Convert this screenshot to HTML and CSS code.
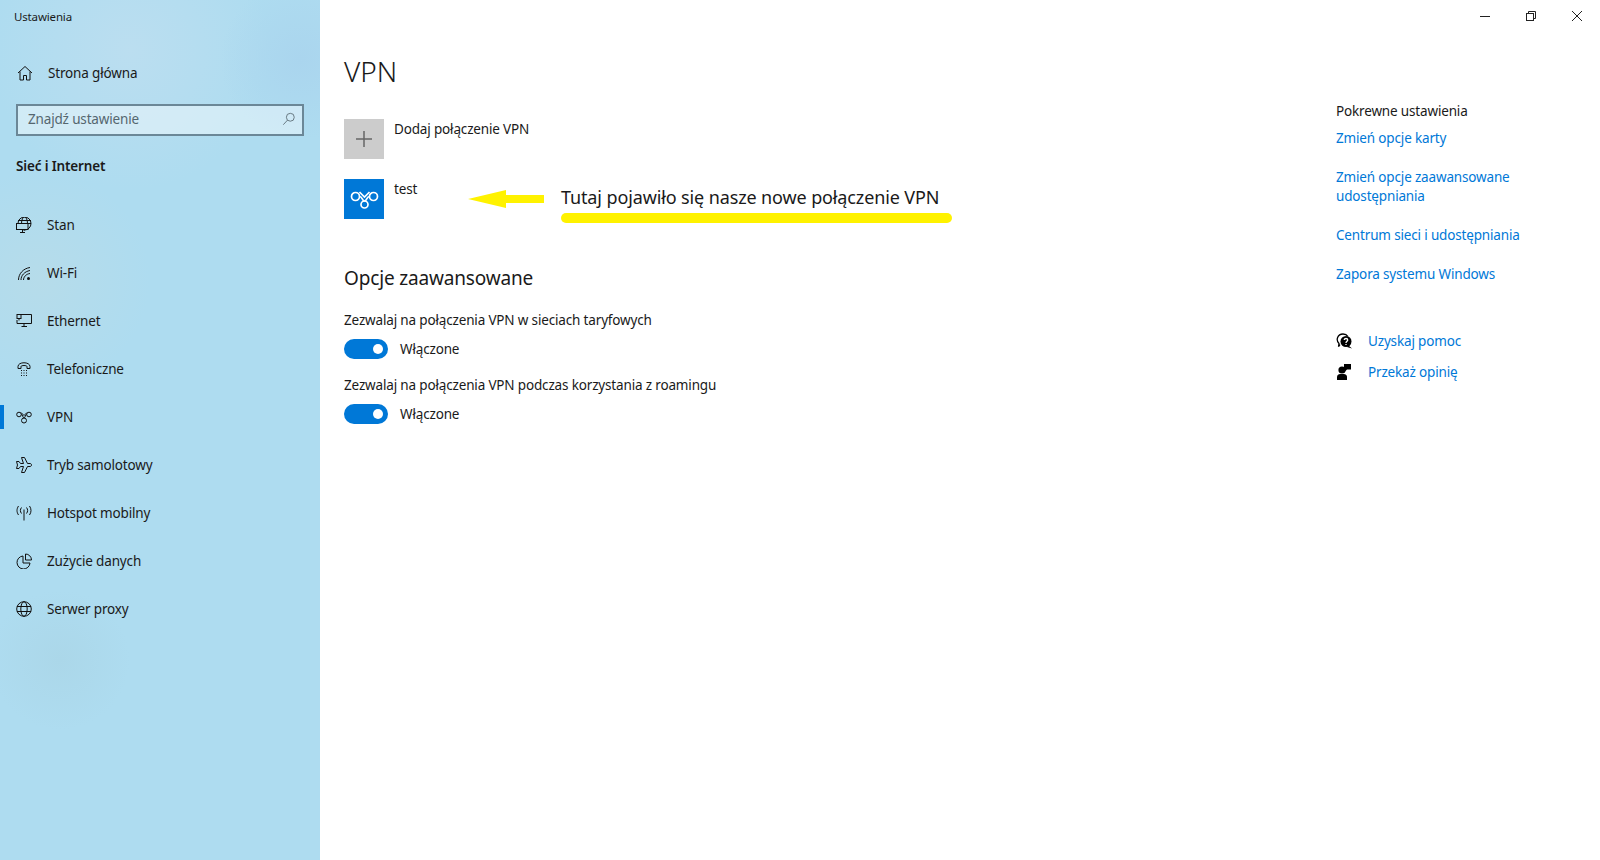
FILE: index.html
```html
<!DOCTYPE html>
<html lang="pl">
<head>
    <title>Ustawienia</title>
    <meta charset="UTF-8">
    <link rel="stylesheet" href="styles.css">
</head>
<body>
    <aside class="sidebar">
        <div class="app-title">Ustawienia</div>
        <a class="home-link">
            <svg class="nav-icon" viewBox="0 0 16 16"><path d="M1 8 8 1.500 15 8M3 6.500V15H6.500V10.500H9.500V15H13V6.500"/></svg>
            <span>Strona główna</span>
        </a>
        <div class="search">
            <span>Znajdź ustawienie</span>
            <svg class="search-icon" viewBox="0 0 16 16"><circle cx="9.500" cy="6" r="4.500"/><path d="M6.300 9.300 1.500 14.500"/></svg>
        </div>
        <div class="section-name">Sieć i Internet</div>
        <nav class="nav">
            <a class="nav-item">
                <svg class="nav-icon" viewBox="0 0 16 16"><circle cx="8.500" cy="6.500" r="6.500"/><ellipse cx="8.500" cy="6.500" rx="3" ry="6.500"/><path d="M2 3.500H15M2 6.500H15"/><rect class="filled-bg" x=".5" y="6.500" width="11.500" height="6"/><path d="M4 15.500H9M6.500 12.500V15.500"/></svg>
                <span>Stan</span>
            </a>
            <a class="nav-item">
                <svg class="nav-icon" viewBox="0 0 16 16"><path d="M2.500 15C2.500 9 7 3.500 14 2.500M5 15C5 10.500 8.500 6.500 14 5.500M7.500 15C7.500 12 10 9 14 8.500"/><circle class="dot" cx="12.500" cy="13.500" r="1.500"/></svg>
                <span>Wi-Fi</span>
            </a>
            <a class="nav-item">
                <svg class="nav-icon" viewBox="0 0 16 16"><path d="M5 1.500H15.500V10.500H1V7M5.500 13.500H11M8 10.500V13.500"/><rect x="1" y="1.500" width="4" height="4"/><path d="M3 5.500V7.500"/></svg>
                <span>Ethernet</span>
            </a>
            <a class="nav-item">
                <svg class="nav-icon" viewBox="0 0 16 16"><path d="M2 7.500V5.500C2 .5 14 .5 14 5.500V7.500H11V5.500C11 4.200 5 4.200 5 5.500V7.500Z"/><path class="dots" d="M5 9.500H11M5 12H11M5 14.500H11"/></svg>
                <span>Telefoniczne</span>
            </a>
            <a class="nav-item active">
                <svg class="nav-icon" viewBox="0 0 16 16"><circle cx="3" cy="5.500" r="2.300"/><circle cx="13" cy="5.500" r="2.300"/><circle cx="8" cy="11.500" r="2.500"/><path d="M5.300 5.500C7 5.500 6.500 9 8 9S9 5.500 10.700 5.500M5 3.500 8 6.500 11 3.500"/></svg>
                <span>VPN</span>
            </a>
            <a class="nav-item">
                <svg class="nav-icon" viewBox="0 0 16 16"><path d="M.5 4.500H3L4.500 6.500H7.500L5.500 .5H8.500L11.500 6.500H14C16 6.500 16 9.500 14 9.500H11.500L8.500 15.500H5.500L7.500 9.500H4.500L3 11.500H.5L1.500 8Z"/></svg>
                <span>Tryb samolotowy</span>
            </a>
            <a class="nav-item">
                <svg class="nav-icon" viewBox="0 0 16 16"><path d="M8 4.500V15.500M5.500 2.500C4 4.500 4 6.500 5.500 8.500M10.500 2.500C12 4.500 12 6.500 10.500 8.500M2.500 1C.5 4 .5 7 2.500 10M13.500 1C15.500 4 15.500 7 13.500 10"/></svg>
                <span>Hotspot mobilny</span>
            </a>
            <a class="nav-item">
                <svg class="nav-icon" viewBox="0 0 16 16"><path d="M7 3A6.500 6.500 0 1 0 14 10H7Z"/><path d="M9.500 1A6 6 0 0 1 15.500 7H9.500Z"/></svg>
                <span>Zużycie danych</span>
            </a>
            <a class="nav-item">
                <svg class="nav-icon" viewBox="0 0 16 16"><circle cx="8" cy="8" r="7.300"/><ellipse cx="8" cy="8" rx="3.200" ry="7.300"/><path d="M1 5.500H15M1 10.500H15"/></svg>
                <span>Serwer proxy</span>
            </a>
        </nav>
    </aside>

    <main class="main">
        <div class="window-controls">
            <svg viewBox="0 0 10 10"><path d="M0 5.500H10"/></svg>
            <svg viewBox="0 0 10 10"><path d="M2.500 2.500V.5H9.500V7.500H7.500"/><rect x=".5" y="2.500" width="7" height="7"/></svg>
            <svg viewBox="0 0 10 10"><path d="M0 0 10 10M10 0 0 10"/></svg>
        </div>
        <div class="columns">
            <section class="content">
                <h1>VPN</h1>
                <div class="tile-row">
                    <div class="tile tile-add">
                        <svg viewBox="0 0 16 16"><path d="M8 0V16M0 8H16"/></svg>
                    </div>
                    <span>Dodaj połączenie VPN</span>
                </div>
                <div class="tile-row">
                    <div class="tile tile-vpn">
                        <svg viewBox="0 0 29 19"><circle cx="5.500" cy="6.500" r="4"/><circle cx="23.500" cy="6.500" r="4"/><circle cx="14.500" cy="14.500" r="3.500"/><path d="M9.500 6.500C12.500 6.500 12 11 14.500 11S16.500 6.500 19.500 6.500M9.500 2 14.500 7 19.500 2"/></svg>
                    </div>
                    <span>test</span>
                </div>
                <h2>Opcje zaawansowane</h2>
                <div class="option">
                    <div class="option-label">Zezwalaj na połączenia VPN w sieciach taryfowych</div>
                    <div class="switch-row"><span class="switch"></span><span>Włączone</span></div>
                </div>
                <div class="option">
                    <div class="option-label">Zezwalaj na połączenia VPN podczas korzystania z roamingu</div>
                    <div class="switch-row"><span class="switch"></span><span>Włączone</span></div>
                </div>
            </section>
            <section class="related">
                <div class="related-title">Pokrewne ustawienia</div>
                <a class="link">Zmień opcje karty</a>
                <a class="link">Zmień opcje zaawansowane udostępniania</a>
                <a class="link">Centrum sieci i udostępniania</a>
                <a class="link">Zapora systemu Windows</a>
                <div class="help">
                    <a class="help-row">
                        <svg viewBox="0 0 17 16"><path class="thin" d="M4 11.500 2.500 13.500 3 10.500C-.5 7 1.500 1 7 1C9.500 1 11 2 12 3.500"/><circle class="solid" cx="10" cy="8.500" r="5.500"/><path class="solid" d="M12.500 12.500 16 15.500 11 14Z"/><path class="mark" d="M8.300 7C8.300 5 11.700 5 11.700 7C11.700 8.300 10 8.300 10 10M10 11V12"/></svg>
                        <span>Uzyskaj pomoc</span>
                    </a>
                    <a class="help-row">
                        <svg viewBox="0 0 17 16"><circle class="solid" cx="6" cy="6" r="3.600"/><path class="solid" d="M1 16V13C1 10.500 3 10 6 10S11 10.500 11 13V16Z"/><path class="solid" d="M8 0H15V5.500H11L9 7.500V5.500H8Z"/></svg>
                        <span>Przekaż opinię</span>
                    </a>
                </div>
            </section>
        </div>
        <!-- yellow note drawn over the screenshot -->
        <svg class="note-arrow" viewBox="0 0 76 18"><path d="M0 9 38 0V5H76V13H38V18Z"/></svg>
        <div class="note-text">Tutaj pojawiło się nasze nowe połączenie VPN</div>
        <div class="note-line"></div>
    </main>
</body>
</html>
```

FILE: styles.css
```css
* {
    box-sizing: border-box;
}

html, body {
    height: 100%;
}

body {
    margin: 0;
    display: flex;
    overflow: hidden;
    font-family: "Noto Sans", "Open Sans", Arial, sans-serif;
    font-size: 13.5px;
    letter-spacing: -0.16px;
    color: #1a1a1a;
    background: #fff;
}

svg {
    display: block;
    fill: none;
    stroke: currentColor;
    stroke-width: 1;
}

/* left pane */
.sidebar {
    width: 320px;
    flex: none;
    padding-top: 8px;
    background:
        radial-gradient(circle at 300px 60px, #aad5ee 0, rgba(170, 213, 238, 0) 80px),
        radial-gradient(circle at 130px 50px, #bbdef0 0, rgba(187, 222, 240, 0) 140px),
        radial-gradient(circle at 60px 660px, #abd7e9 0, rgba(171, 215, 233, 0) 70px),
        radial-gradient(circle at 40px 280px, #b6dcea 0, rgba(182, 220, 234, 0) 110px),
        #aedcf0;
}

.app-title {
    height: 18px;
    line-height: 18px;
    padding-left: 14px;
    font-size: 11.5px;
}

.home-link {
    display: flex;
    align-items: center;
    height: 48px;
    margin-top: 23px;
    padding-left: 17px;
}

.nav-icon {
    width: 16px;
    height: 16px;
    flex: none;
    margin-right: 15px;
    stroke: #111;
}

.search {
    display: flex;
    align-items: center;
    justify-content: space-between;
    height: 32px;
    margin: 7px 16px 0;
    padding: 0 6px 2px 10px;
    border: 2px solid #6b8797;
    background: rgba(255, 255, 255, 0.42);
    color: #55666f;
}

.search-icon {
    width: 14px;
    height: 14px;
    stroke: #5b6b74;
}

.section-name {
    height: 20px;
    line-height: 20px;
    margin-top: 20px;
    padding-left: 16px;
    font-weight: 600;
}

.nav {
    margin-top: 25px;
}

.nav-item {
    display: flex;
    align-items: center;
    height: 48px;
    padding-left: 16px;
    position: relative;
}

.active::before {
    content: "";
    position: absolute;
    left: 0;
    top: 12px;
    width: 4px;
    height: 24px;
    background: #0078d7;
}

.filled-bg {
    fill: #b5dcec;
}

.dot {
    fill: #111;
    stroke: none;
}

.dots {
    stroke-dasharray: 1 1.500;
}

/* right pane */
.main {
    flex: 1;
    position: relative;
    min-width: 0;
}

.window-controls {
    display: flex;
    justify-content: flex-end;
    gap: 36px;
    padding: 11px 18px 0 0;
}

.window-controls svg {
    width: 10px;
    height: 10px;
    stroke: #222;
}

.columns {
    display: flex;
    justify-content: space-between;
}

.content {
    padding: 26px 0 0 24px;
}

h1 {
    margin: 0 0 24px;
    height: 48px;
    line-height: 48px;
    font-size: 28px;
    font-weight: 300;
    letter-spacing: 0;
}

.tile-row {
    display: flex;
    height: 40px;
    margin-bottom: 20px;
}

.tile-row span {
    margin: 0 0 0 10px;
    line-height: 20px;
}

.tile {
    width: 40px;
    height: 40px;
    display: flex;
    align-items: center;
    justify-content: center;
}

.tile-add {
    background: #ccc;
    color: #666;
}

.tile-add svg {
    width: 16px;
    height: 16px;
    stroke-width: 1.5;
}

.tile-vpn {
    background: #0078d7;
    color: #fff;
}

.tile-vpn svg {
    width: 29px;
    height: 19px;
    stroke-width: 1.7;
}

h2 {
    margin: 45px 0 18px;
    height: 28px;
    line-height: 28px;
    font-size: 19px;
    font-weight: 400;
}

.option {
    margin-bottom: 15px;
}

.option-label {
    height: 20px;
    line-height: 20px;
}

.switch-row {
    display: flex;
    align-items: center;
    gap: 12px;
    height: 20px;
    margin-top: 9px;
    line-height: 20px;
}

.option + .option {
    margin-top: 16px;
}

.switch {
    width: 44px;
    height: 20px;
    border-radius: 10px;
    background: #0078d7;
    display: flex;
    justify-content: flex-end;
    align-items: center;
    padding-right: 5px;
}

.switch::after {
    content: "";
    width: 10px;
    height: 10px;
    border-radius: 50%;
    background: #fff;
}

.related {
    width: 264px;
    padding-top: 80px;
}

.related-title {
    height: 20px;
    line-height: 20px;
    margin-bottom: 8px;
}

.link {
    display: block;
    width: 210px;
    line-height: 18.500px;
    margin-bottom: 20.7px;
    color: #0078d7;
}

.help {
    margin-top: 47px;
}

.help-row {
    display: flex;
    align-items: center;
    height: 20px;
    margin-bottom: 11px;
    color: #0078d7;
}

.help-row svg {
    width: 17px;
    height: 16px;
    flex: none;
    margin-right: 15px;
    color: #000;
}

.solid {
    fill: #000;
    stroke: none;
}

.thin {
    stroke-width: 1.300;
}

.mark {
    stroke: #fff;
    stroke-width: 1.300;
}

.note-arrow {
    position: absolute;
    left: 148px;
    top: 190px;
    width: 76px;
    height: 18px;
    stroke: none;
    fill: #fff200;
}

.note-text {
    position: absolute;
    left: 241px;
    top: 184px;
    line-height: 26px;
    font-size: 18px;
    letter-spacing: -0.12px;
    white-space: nowrap;
}

.note-line {
    position: absolute;
    left: 241px;
    top: 213px;
    width: 391px;
    height: 10px;
    border-radius: 5px;
    background: #fff200;
}
```
